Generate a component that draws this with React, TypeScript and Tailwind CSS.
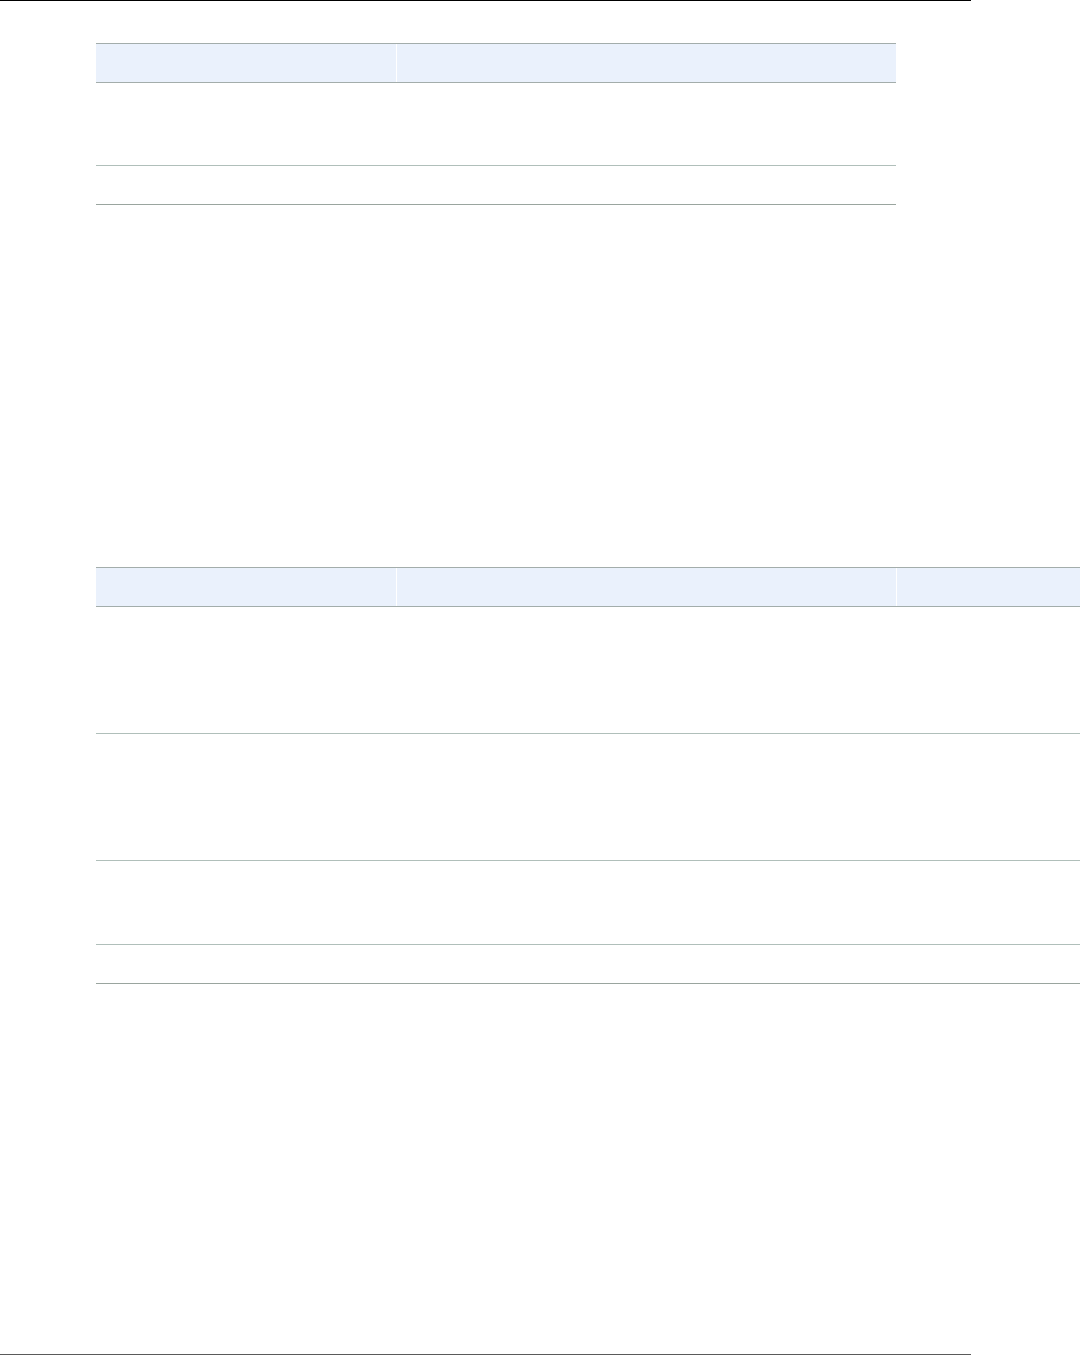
import React from "react";

// 빈 표 한 줄 높이 목록
const firstTableRows = [83, 39];
const secondTableRows = [127, 127, 84, 39];

const HeaderRow = ({ cols }: { cols: number }) => (
  <div className="flex h-[40px] border-y border-[#a3adab] bg-[#eaf1fc]">
    <div className="w-[300px] shrink-0" />
    <div className="w-[500px] shrink-0 border-l border-white" />
    {cols > 2 && <div className="w-[300px] shrink-0 border-l border-white" />}
  </div>
);

const BodyRows = ({ heights, width }: { heights: number[]; width: string }) => (
  <>
    {heights.map((h, i) => (
      <div
        key={i}
        className={`${width} border-b ${i === heights.length - 1 ? "border-[#9aa59f]" : "border-[#b0bfba]"}`}
        style={{ height: h }}
      />
    ))}
  </>
);

export default function App() {
  return (
    <div className="w-[1080px] h-[1355px] bg-white overflow-hidden flex flex-col font-['Liberation_Sans',sans-serif]">
      {/* 상단 구분선 */}
      <div className="h-px w-[971px] bg-black shrink-0" />

      {/* 첫 번째 표 */}
      <div className="mt-[42px] ml-[96px] w-[800px]">
        <HeaderRow cols={2} />
        <BodyRows heights={firstTableRows} width="w-[800px]" />
      </div>

      {/* 두 번째 표 */}
      <div className="mt-[362px] ml-[96px] w-[1100px]">
        <HeaderRow cols={3} />
        <BodyRows heights={secondTableRows} width="w-[1100px]" />
      </div>

      {/* 하단 구분선 */}
      <div className="mt-auto h-px w-[971px] bg-[#5a5a5a] shrink-0" />
    </div>
  );
}
